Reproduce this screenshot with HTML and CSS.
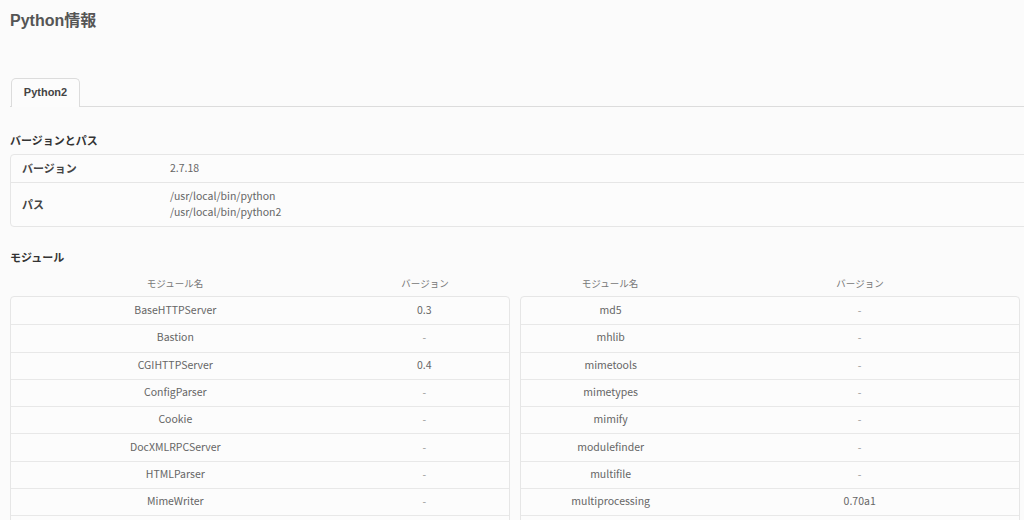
FILE: index.html
```html
<!DOCTYPE html>
<html lang="ja">
<head>
    <meta charset="UTF-8">
    <meta name="viewport" content="width=device-width, initial-scale=1.0">
    <title>Python情報</title>
    <link rel="stylesheet" href="styles.css">
</head>
<body>
    <div id="page">
        <h1>Python情報</h1>

        <div class="tabs">
            <div class="tab active">Python2</div>
        </div>

        <h2>バージョンとパス</h2>
        <div class="card info">
            <div class="info-row">
                <div class="info-label">バージョン</div>
                <div class="info-value">2.7.18</div>
            </div>
            <div class="info-row paths">
                <div class="info-label">パス</div>
                <div class="info-value">
                    <div>/usr/local/bin/python</div>
                    <div>/usr/local/bin/python2</div>
                </div>
            </div>
        </div>

        <h2 class="modules-title">モジュール</h2>
        <div class="modules">
            <div class="module-col left">
                <div class="module-head">
                    <span class="col-name">モジュール名</span>
                    <span class="col-ver">バージョン</span>
                </div>
                <div class="card module-list">
                    <div class="module-row"><span class="col-name">BaseHTTPServer</span><span class="col-ver">0.3</span></div>
                    <div class="module-row"><span class="col-name">Bastion</span><span class="col-ver dash">-</span></div>
                    <div class="module-row"><span class="col-name">CGIHTTPServer</span><span class="col-ver">0.4</span></div>
                    <div class="module-row"><span class="col-name">ConfigParser</span><span class="col-ver dash">-</span></div>
                    <div class="module-row"><span class="col-name">Cookie</span><span class="col-ver dash">-</span></div>
                    <div class="module-row"><span class="col-name">DocXMLRPCServer</span><span class="col-ver dash">-</span></div>
                    <div class="module-row"><span class="col-name">HTMLParser</span><span class="col-ver dash">-</span></div>
                    <div class="module-row"><span class="col-name">MimeWriter</span><span class="col-ver dash">-</span></div>
                    <div class="module-row"><span class="col-name">Queue</span><span class="col-ver dash">-</span></div>
                    <div class="module-row"><span class="col-name">SimpleHTTPServer</span><span class="col-ver">0.6</span></div>
                </div>
            </div>
            <div class="module-col right">
                <div class="module-head">
                    <span class="col-name">モジュール名</span>
                    <span class="col-ver">バージョン</span>
                </div>
                <div class="card module-list">
                    <div class="module-row"><span class="col-name">md5</span><span class="col-ver dash">-</span></div>
                    <div class="module-row"><span class="col-name">mhlib</span><span class="col-ver dash">-</span></div>
                    <div class="module-row"><span class="col-name">mimetools</span><span class="col-ver dash">-</span></div>
                    <div class="module-row"><span class="col-name">mimetypes</span><span class="col-ver dash">-</span></div>
                    <div class="module-row"><span class="col-name">mimify</span><span class="col-ver dash">-</span></div>
                    <div class="module-row"><span class="col-name">modulefinder</span><span class="col-ver dash">-</span></div>
                    <div class="module-row"><span class="col-name">multifile</span><span class="col-ver dash">-</span></div>
                    <div class="module-row"><span class="col-name">multiprocessing</span><span class="col-ver">0.70a1</span></div>
                    <div class="module-row"><span class="col-name">mutex</span><span class="col-ver dash">-</span></div>
                    <div class="module-row"><span class="col-name">netrc</span><span class="col-ver dash">-</span></div>
                </div>
            </div>
        </div>
    </div>
</body>
</html>
```

FILE: styles.css
```css
html, body {
    margin: 0;
    padding: 0;
    background: #fbfbfb;
    overflow: hidden;
}

body {
    font-family: "Noto Sans CJK JP", "Liberation Sans", sans-serif;
    font-size: 10.5px;
    color: #666;
}

#page {
    width: 1040px;
    padding: 10px 0 0 10px;
}

h1 {
    font-family: "Liberation Sans", "Noto Sans CJK JP", sans-serif;
    font-size: 16px;
    line-height: 20px;
    font-weight: bold;
    color: #555;
    margin: 1px 0 47px;
}

.tabs {
    display: flex;
    border-bottom: 1px solid #dcdcdc;
    padding-left: 1px;
}

.tab {
    width: 67px;
    height: 27px;
    line-height: 27px;
    text-align: center;
    font-family: "Liberation Sans", "Noto Sans CJK JP", sans-serif;
    font-size: 11px;
    font-weight: bold;
    color: #444;
    border: 1px solid #dcdcdc;
    border-bottom: none;
    border-radius: 5px 5px 0 0;
    background: #fcfcfc;
    margin-bottom: -1px;
    padding-bottom: 1px;
}

h2 {
    font-size: 11px;
    line-height: 16px;
    font-weight: bold;
    color: #333;
    margin: 25px 0 6px;
}

.card {
    background: #fcfcfc;
    border: 1px solid #e6e6e6;
    border-radius: 4px;
}

.info-row {
    display: flex;
    align-items: center;
    box-sizing: border-box;
    height: 27px;
    padding-bottom: 1px;
}

.info-row.paths {
    height: 44px;
    border-top: 1px solid #e6e6e6;
    padding: 3px 0 5px;
}

.info-label {
    width: 148px;
    padding-left: 11px;
    font-size: 11px;
    font-weight: bold;
    color: #444;
}

.info-value {
    line-height: 16px;
    color: #666;
}

.modules-title {
    margin: 22px 0 0;
}

.modules {
    display: grid;
    grid-template-columns: 500px 500px;
    gap: 10px;
}

.module-head {
    display: flex;
    padding: 10px 0 5px;
    line-height: 16px;
    font-size: 9.5px;
    color: #777;
}

.module-row {
    display: flex;
    align-items: center;
    box-sizing: border-box;
    height: 27.3px;
    padding-bottom: 3px;
    border-top: 1px solid #e8e8e8;
    color: #666;
}

.module-row:first-child {
    border-top: none;
}

.col-name, .col-ver {
    text-align: center;
}

.left .col-name {
    width: 330px;
}

.left .col-ver {
    width: 170px;
}

.right .col-name {
    width: 180px;
}

.right .col-ver {
    width: 320px;
}

.dash {
    color: #999;
}
```
